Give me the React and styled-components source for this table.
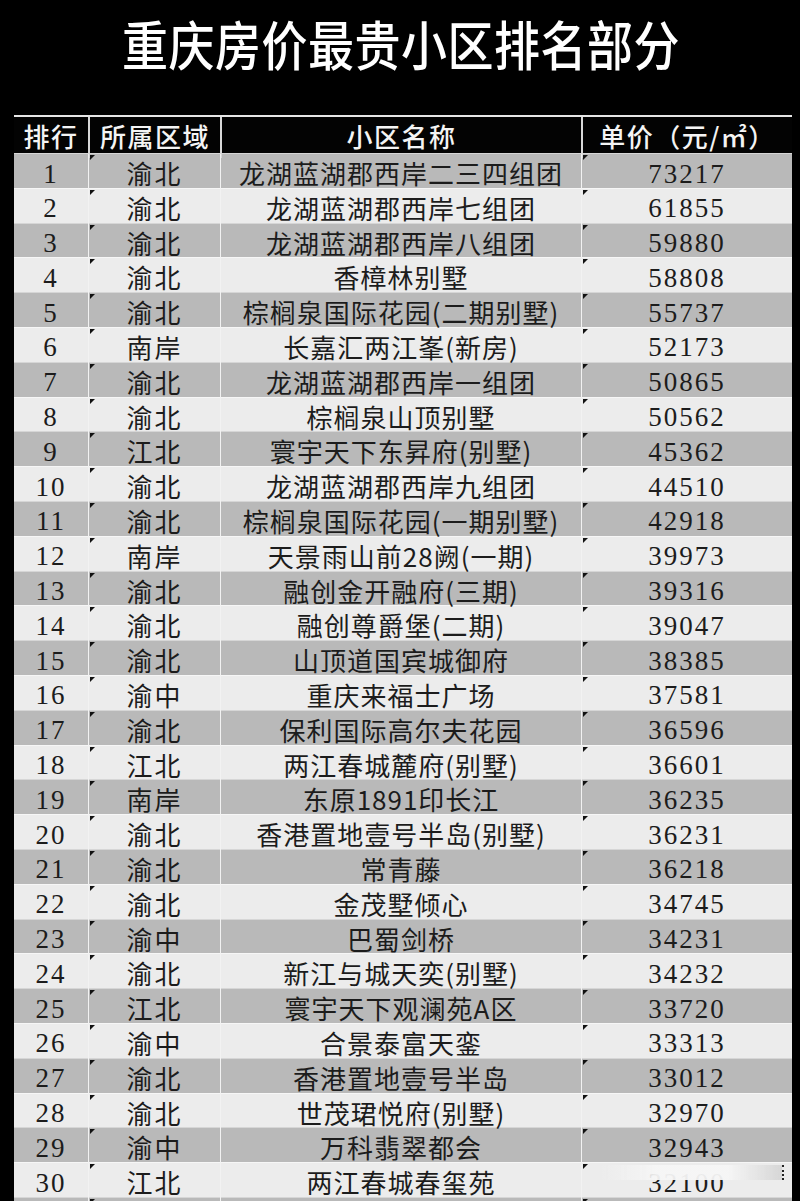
import React from 'react';
import styled, { createGlobalStyle, css } from 'styled-components';

const rows = [
    [1, '渝北', '龙湖蓝湖郡西岸二三四组团', '73217'],
    [2, '渝北', '龙湖蓝湖郡西岸七组团', '61855'],
    [3, '渝北', '龙湖蓝湖郡西岸八组团', '59880'],
    [4, '渝北', '香樟林别墅', '58808'],
    [5, '渝北', '棕榈泉国际花园(二期别墅)', '55737'],
    [6, '南岸', '长嘉汇两江峯(新房)', '52173'],
    [7, '渝北', '龙湖蓝湖郡西岸一组团', '50865'],
    [8, '渝北', '棕榈泉山顶别墅', '50562'],
    [9, '江北', '寰宇天下东昇府(别墅)', '45362'],
    [10, '渝北', '龙湖蓝湖郡西岸九组团', '44510'],
    [11, '渝北', '棕榈泉国际花园(一期别墅)', '42918'],
    [12, '南岸', '天景雨山前28阙(一期)', '39973'],
    [13, '渝北', '融创金开融府(三期)', '39316'],
    [14, '渝北', '融创尊爵堡(二期)', '39047'],
    [15, '渝北', '山顶道国宾城御府', '38385'],
    [16, '渝中', '重庆来福士广场', '37581'],
    [17, '渝北', '保利国际高尔夫花园', '36596'],
    [18, '江北', '两江春城麓府(别墅)', '36601'],
    [19, '南岸', '东原1891印长江', '36235'],
    [20, '渝北', '香港置地壹号半岛(别墅)', '36231'],
    [21, '渝北', '常青藤', '36218'],
    [22, '渝北', '金茂墅倾心', '34745'],
    [23, '渝中', '巴蜀剑桥', '34231'],
    [24, '渝北', '新江与城天奕(别墅)', '34232'],
    [25, '江北', '寰宇天下观澜苑A区', '33720'],
    [26, '渝中', '合景泰富天銮', '33313'],
    [27, '渝北', '香港置地壹号半岛', '33012'],
    [28, '渝北', '世茂珺悦府(别墅)', '32970'],
    [29, '渝中', '万科翡翠都会', '32943'],
    [30, '江北', '两江春城春玺苑', '32100'],
    [31, '', '', ''],
];

const GlobalStyle = createGlobalStyle`
    html, body {
        margin: 0;
        padding: 0;
        background: #000;
    }
`;

const Page = styled.div`
    width: 800px;
    height: 1201px;
    overflow: hidden;
    background: #000;
    font-family: 'Liberation Serif', 'Noto Sans CJK SC', serif;
`;

const TitleBar = styled.div`
    height: 115px;
    display: flex;
    justify-content: center;
    padding-top: 14px;
    box-sizing: border-box;
`;

const Title = styled.h1`
    margin: 0 0 0 2px;
    color: #fff;
    font-family: 'Noto Sans CJK SC', sans-serif;
    font-weight: 500;
    font-size: 46px;
    line-height: 50px;
    letter-spacing: 0.5px;
    transform: scaleY(1.16);
    transform-origin: top center;
`;

const Table = styled.div`
    margin-left: 14px;
    width: 778px;
    border-top: 2px solid #e6e6e6;
`;

const columns = '74px 132px 361px 211px';

const HeaderRow = styled.div`
    display: grid;
    grid-template-columns: ${columns};
    height: 36px;
    background: #030303;
`;

const HeaderCell = styled.div`
    display: flex;
    align-items: center;
    justify-content: center;
    color: #f4f4f4;
    font-family: 'Noto Sans CJK SC', sans-serif;
    font-size: 26px;
    font-weight: 500;
    letter-spacing: 1.5px;
    border-left: ${(p) => (p.$first ? 'none' : '2px solid #d8d8d8')};
    padding-bottom: 4px;
`;

const Row = styled.div`
    display: grid;
    grid-template-columns: ${columns};
    height: 34.8px;
    box-sizing: border-box;
    background: ${(p) => (p.$odd ? '#b9b9b9' : '#ececec')};
    border-top: 1px solid ${(p) => (p.$odd ? '#d6d6d6' : '#f6f6f6')};
    color: #1c1c1c;
`;

const Cell = styled.div`
    position: relative;
    display: flex;
    align-items: center;
    justify-content: center;
    font-size: 26px;
    border-left: ${(p) => (p.$first ? 'none' : '1px solid #f2f2f2')};
    ${(p) =>
        p.$num
            ? css`
                  font-family: 'Liberation Serif', serif;
                  letter-spacing: 2px;
                  font-size: 27px;
                  padding-bottom: 1px;
              `
            : css`
                  font-family: 'Noto Sans CJK SC', sans-serif;
                  font-weight: 400;
                  letter-spacing: ${p.$tight ? '1px' : '2px'};
                  padding-bottom: 4px;
              `}
    ${(p) =>
        p.$mark &&
        css`
            &::before {
                content: '';
                position: absolute;
                top: 1px;
                left: 1px;
                width: 0;
                height: 0;
                border-top: 5px solid #111;
                border-right: 5px solid transparent;
            }
        `}
`;

const Fade = styled.span`
    position: absolute;
    left: 20px;
    right: 8px;
    top: 2px;
    height: 15px;
    background: linear-gradient(
        90deg,
        rgba(236, 236, 236, 0.5) 0%,
        rgba(246, 246, 246, 0.95) 30%,
        rgba(246, 246, 246, 0.95) 70%,
        rgba(200, 200, 200, 0.6) 100%
    );
    border-right: 2px dotted #222;
`;

const App = () => (
    <Page>
        <GlobalStyle />
        <TitleBar>
            <Title>重庆房价最贵小区排名部分</Title>
        </TitleBar>
        <Table>
            <HeaderRow>
                <HeaderCell $first>排行</HeaderCell>
                <HeaderCell>所属区域</HeaderCell>
                <HeaderCell>小区名称</HeaderCell>
                <HeaderCell>单价（元/㎡）</HeaderCell>
            </HeaderRow>
            {rows.map(([rank, area, name, price]) => (
                <Row key={rank} $odd={rank % 2 === 1}>
                    <Cell $first $num>
                        {rank <= 30 ? rank : ''}
                    </Cell>
                    <Cell $mark>{area}</Cell>
                    <Cell $tight>{name}</Cell>
                    <Cell $mark $num>
                        {price}
                        {rank === 30 && <Fade />}
                    </Cell>
                </Row>
            ))}
        </Table>
    </Page>
);

export default App;
